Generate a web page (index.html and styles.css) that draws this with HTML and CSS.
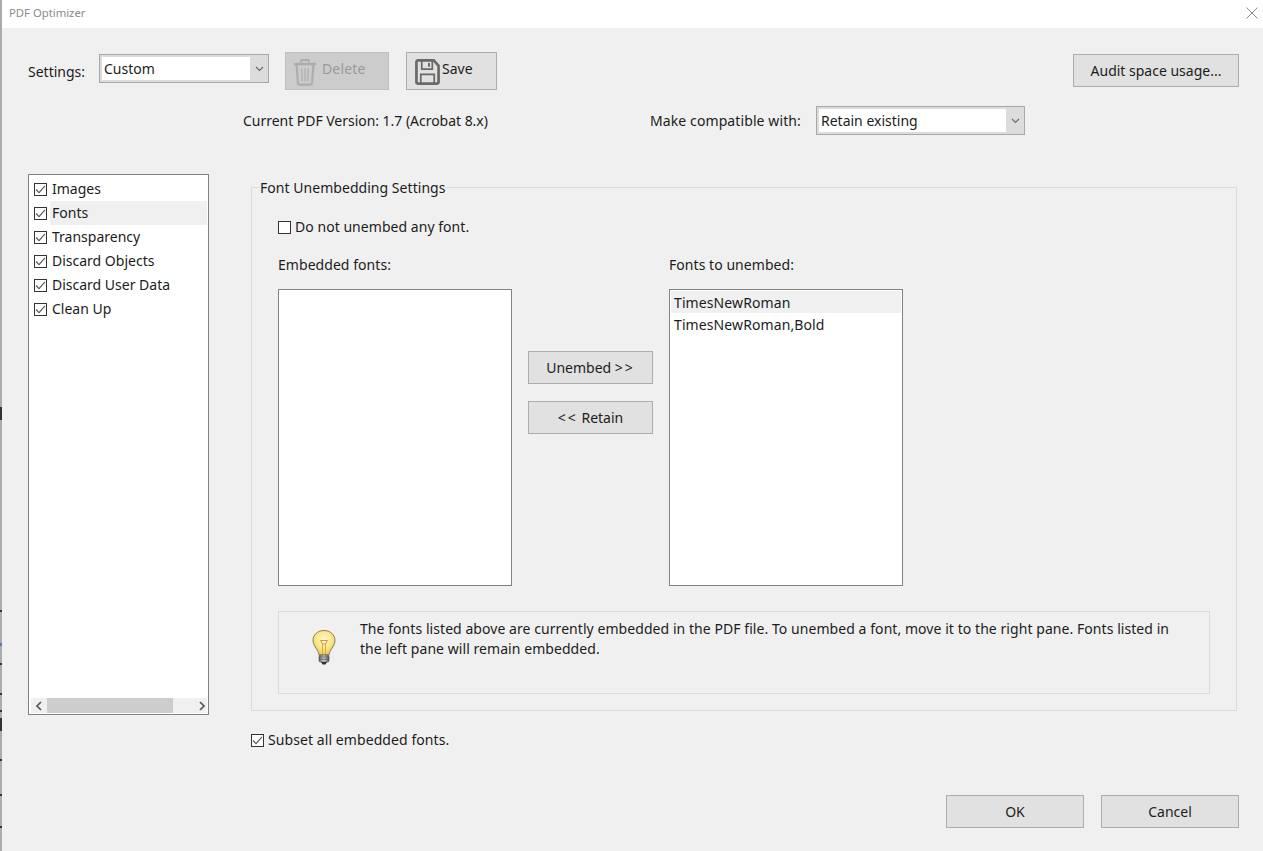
FILE: index.html
```html
<!DOCTYPE html>
<html lang="en">
<head>
<meta charset="utf-8">
<title>PDF Optimizer</title>
<link rel="stylesheet" href="styles.css">
</head>
<body>
<svg class="defs" width="0" height="0" aria-hidden="true">
  <symbol id="tick" viewBox="0 0 11 11"><path d="M1 5.500 4 8.600 10 1.800" fill="none" stroke="#555" stroke-width="1.100"/></symbol>
  <symbol id="chev" viewBox="0 0 9 6"><path d="M1 1 4.500 4.500 8 1" fill="none" stroke="#666" stroke-width="1.100"/></symbol>
</svg>
<div class="window">
  <header class="titlebar">
    <span class="title">PDF Optimizer</span>
    <svg class="close" width="12" height="12" viewBox="0 0 12 12"><path d="M.5 .5 11.500 11.500M11.500 .5 .5 11.500" stroke="#8a8a8a" stroke-width="1" fill="none"/></svg>
  </header>

  <section class="toolbar">
    <span class="settings-label">Settings:</span>
    <div class="combo combo-settings">
      <span class="combo-value">Custom</span>
      <svg class="chev" width="9" height="6"><use href="#chev"/></svg>
    </div>
    <div class="btn btn-delete">
      <svg width="26" height="28" viewBox="0 0 26 30" fill="none" stroke="#adadad">
        <path d="M1 6.500H25" stroke-width="2.600"/>
        <path d="M9 5V2.200H17V5" stroke-width="2"/>
        <path d="M4 7.500 5.500 27a1.500 1.500 0 0 0 1.500 1.400H19a1.500 1.500 0 0 0 1.500-1.400L22 7.500" stroke-width="2.400"/>
        <path d="M9.500 11 10 25M13 11V25M16.500 11 16 25" stroke-width="1.300"/>
      </svg>
      <span>Delete</span>
    </div>
    <div class="btn btn-save">
      <svg width="25" height="26" viewBox="0 0 26 27" fill="none" stroke="#696969">
        <path d="M3 1.500H19.500L24.500 7V24a1.500 1.500 0 0 1-1.500 1.500H3A1.500 1.500 0 0 1 1.500 24V3A1.500 1.500 0 0 1 3 1.500Z" stroke-width="2.800"/>
        <path d="M7 2V10.500H18V2" stroke-width="1.800"/>
        <path d="M14.500 4V8" stroke-width="2"/>
        <path d="M6 25V16H20V25" stroke-width="1.800"/>
      </svg>
      <span>Save</span>
    </div>
    <div class="btn btn-audit">Audit space usage...</div>
  </section>

  <section class="version-row">
    <span class="version">Current PDF Version: 1.7 (Acrobat 8.x)</span>
    <span class="compat-label">Make compatible with:</span>
    <div class="combo combo-compat">
      <span class="combo-value">Retain existing</span>
      <svg class="chev" width="9" height="6"><use href="#chev"/></svg>
    </div>
  </section>

  <main class="main">
    <aside class="panel-list">
      <ul class="panels">
        <li class="panel-item"><span class="check"><svg width="11" height="11"><use href="#tick"/></svg></span><span class="panel-name">Images</span></li>
        <li class="panel-item"><span class="check"><svg width="11" height="11"><use href="#tick"/></svg></span><span class="panel-name is-active">Fonts</span></li>
        <li class="panel-item"><span class="check"><svg width="11" height="11"><use href="#tick"/></svg></span><span class="panel-name">Transparency</span></li>
        <li class="panel-item"><span class="check"><svg width="11" height="11"><use href="#tick"/></svg></span><span class="panel-name">Discard Objects</span></li>
        <li class="panel-item"><span class="check"><svg width="11" height="11"><use href="#tick"/></svg></span><span class="panel-name">Discard User Data</span></li>
        <li class="panel-item"><span class="check"><svg width="11" height="11"><use href="#tick"/></svg></span><span class="panel-name">Clean Up</span></li>
      </ul>
      <div class="hscroll">
        <svg width="8" height="10" viewBox="0 0 8 10"><path d="M6 1 2 5 6 9" fill="none" stroke="#555" stroke-width="1.700"/></svg>
        <div class="hscroll-thumb"></div>
        <svg width="8" height="10" viewBox="0 0 8 10"><path d="M2 1 6 5 2 9" fill="none" stroke="#555" stroke-width="1.700"/></svg>
      </div>
    </aside>

    <div class="content">
      <section class="group">
        <span class="legend">Font Unembedding Settings</span>
        <label class="do-not">
          <span class="check"></span>
          <span>Do not unembed any font.</span>
        </label>
        <div class="columns">
          <div class="col">
            <div class="col-label">Embedded fonts:</div>
            <div class="listbox"></div>
          </div>
          <div class="move-buttons">
            <div class="btn btn-move">Unembed&nbsp;<span class="arrows">&gt;&gt;</span></div>
            <div class="btn btn-move"><span class="arrows">&lt;&lt;</span>&nbsp;Retain</div>
          </div>
          <div class="col">
            <div class="col-label">Fonts to unembed:</div>
            <div class="listbox">
              <div class="font-row is-selected">TimesNewRoman</div>
              <div class="font-row">TimesNewRoman,Bold</div>
            </div>
          </div>
        </div>
        <div class="tip">
          <svg class="bulb" width="28" height="38" viewBox="0 0 28 38">
            <defs>
              <radialGradient id="glass" cx="50%" cy="38%" r="62%">
                <stop offset="0" stop-color="#fff8d0"/>
                <stop offset=".55" stop-color="#fbe78e"/>
                <stop offset="1" stop-color="#ecc75a"/>
              </radialGradient>
              <linearGradient id="base" x1="0" x2="1" y1="0" y2="0">
                <stop offset="0" stop-color="#666"/>
                <stop offset=".5" stop-color="#d8d8d8"/>
                <stop offset="1" stop-color="#555"/>
              </linearGradient>
            </defs>
            <path d="M14 1.500C7.500 1.500 3 6 3 11.500c0 4.500 3.500 7.500 5 11 .6 1.400.9 2.500 1 3.500h10c.1-1 .4-2.100 1-3.500 1.500-3.500 5-6.500 5-11C25 6 20.500 1.500 14 1.500Z" fill="url(#glass)" stroke="#8b7d4e" stroke-width="1"/>
            <path d="M10.500 11.500h7l-2 3.500h-3Z" fill="#fff7cc" stroke="#c99f32" stroke-width="1"/>
            <path d="M12.500 15v10M15.500 15v10" stroke="#d9ad3c" stroke-width="1"/>
            <rect x="9" y="26" width="10" height="7" rx="1.500" fill="url(#base)" stroke="#444" stroke-width=".6"/>
            <path d="M9.500 28H18.500M9.500 30.300H18.500" stroke="#555" stroke-width=".8"/>
            <path d="M11 33h6l-1.500 2.500h-3Z" fill="#333"/>
          </svg>
          <p class="tip-text">The fonts listed above are currently embedded in the PDF file. To unembed a font, move it to the right pane. Fonts listed in the left pane will remain embedded.</p>
        </div>
      </section>
      <label class="subset">
        <span class="check"><svg width="11" height="11"><use href="#tick"/></svg></span>
        <span class="subset-text">Subset all embedded fonts.</span>
      </label>
    </div>
  </main>

  <footer class="footer">
    <div class="btn btn-footer">OK</div>
    <div class="btn btn-footer">Cancel</div>
  </footer>
</div>
</body>
</html>
```

FILE: styles.css
```css
* { box-sizing: border-box; }
html, body { margin: 0; padding: 0; }
body {
  width: 1263px;
  height: 851px;
  overflow: hidden;
  background: #f0f0f0;
  color: #1c1c1c;
  font-family: "Noto Sans", "Open Sans", sans-serif;
  font-size: 14px;
  line-height: 20px;
}
.defs { position: absolute; }
.window {
  height: 851px;
  border-left: 2px solid #ababab;
  border-image: linear-gradient(to bottom,
    #ababab 407px, #333 407px, #333 420px, #ababab 420px,
    #ababab 609px, #333 609px, #333 611px, #ababab 611px,
    #ababab 642px, #5a78b0 642px, #5a78b0 645px, #ababab 645px,
    #ababab 662px, #333 662px, #333 664px, #ababab 664px,
    #ababab 692px, #333 692px, #333 694px, #ababab 694px,
    #ababab 709px, #333 709px, #333 711px, #ababab 711px,
    #ababab 717px, #333 717px, #333 730px, #ababab 730px,
    #ababab 757px, #333 757px, #333 759px, #ababab 759px,
    #ababab 792px, #333 792px, #333 794px, #ababab 794px,
    #ababab 824px, #333 824px, #333 826px, #ababab 826px) 2;
  display: flex;
  flex-direction: column;
}

.titlebar {
  height: 28px;
  flex: none;
  background: #fff;
  display: flex;
  align-items: center;
  justify-content: space-between;
  padding: 0 5px 3px 7px;
}
.title { font-size: 11.300px; color: #8c8c8c; }
.close { display: block; margin-top: 0; }

.toolbar {
  height: 38px;
  margin-top: 24px;
  padding: 0 24px 0 26px;
  display: flex;
  align-items: flex-start;
}
.settings-label { margin-top: 10px; width: 71px; flex: none; }
.combo {
  display: flex;
  align-items: stretch;
  background: #dcdcdc;
  border: 1px solid #a8a8a8;
  position: relative;
}
.combo-value {
  flex: 1;
  background: #fff;
  margin: 2px 0 2px 2px;
  padding: 1px 0 0 2px;
  line-height: 22px;
}
.chev { align-self: center; margin: 0 4px 0 5px; }
.combo-settings { width: 170px; height: 29px; margin-top: 2px; margin-right: 16px; }
.combo-compat { width: 209px; height: 29px; }

.btn {
  display: flex;
  align-items: center;
  justify-content: center;
  background: #e1e1e1;
  border: 1px solid #adadad;
  flex: none;
}
.btn-delete {
  width: 104px;
  height: 38px;
  margin-right: 17px;
  background: #cccccc;
  border-color: #bfbfbf;
  color: #9a9a9a;
  justify-content: flex-start;
  gap: 4px;
  padding-left: 6px;
  padding-bottom: 4px;
}
.btn-delete svg { margin-top: 6px; }
.btn-delete span { margin-top: -1px; letter-spacing: .15px; }
.btn-save {
  width: 91px;
  height: 38px;
  justify-content: flex-start;
  gap: 2px;
  padding-left: 8px;
  padding-bottom: 4px;
}
.btn-save svg { margin-top: 5px; }
.btn-save span { margin-top: -1px; }
.btn-audit {
  width: 166px;
  height: 33px;
  margin-top: 2px;
  margin-left: auto;
}

.version-row {
  height: 29px;
  margin-top: 16px;
  display: flex;
  align-items: center;
  padding-left: 241px;
}
.version { width: 407px; flex: none; letter-spacing: -.03px; }
.compat-label { width: 166px; flex: none; letter-spacing: .1px; }

.main {
  margin-top: 39px;
  padding-left: 26px;
  display: flex;
  align-items: flex-start;
}
.panel-list {
  width: 181px;
  height: 541px;
  flex: none;
  background: #fff;
  border: 1px solid #828282;
  display: flex;
  flex-direction: column;
  padding: 2px 1px 1px 2px;
}
.panels {
  list-style: none;
  margin: 0;
  padding: 0;
  flex: 1;
}
.panel-item {
  height: 24px;
  display: flex;
  align-items: center;
}
.panel-item .check { margin: 0 5px 0 3px; }
.panel-name {
  flex: 1;
  height: 24px;
  line-height: 24px;
  padding-left: 2px;
  margin-left: -2px;
}
.panel-name.is-active { background: #f0f0f0; }
.check {
  width: 13px;
  height: 13px;
  flex: none;
  border: 1px solid #333;
  background: #fff;
  display: inline-flex;
  align-items: center;
  justify-content: center;
}
.check svg { display: block; }
.hscroll {
  height: 15px;
  flex: none;
  background: #f0f0f0;
  display: flex;
  align-items: center;
  justify-content: space-between;
  padding: 0 1px 0 4px;
}
.hscroll-thumb {
  width: 126px;
  height: 15px;
  background: #cdcdcd;
  margin-left: 4px;
  margin-right: auto;
}

.content {
  margin-left: 42px;
  width: 986px;
}
.group {
  height: 524px;
  margin-top: 13px;
  border: 1px solid #dcdcdc;
  padding: 0 26px;
}
.legend {
  display: block;
  width: max-content;
  margin: -10px 0 0 -18px;
  background: #f0f0f0;
  height: 20px;
  letter-spacing: .04px;
}
.do-not {
  display: flex;
  align-items: center;
  gap: 4px;
  margin-top: 19px;
  height: 20px;
  letter-spacing: .04px;
}
.columns {
  display: flex;
  margin-top: 18px;
}
.col { width: 234px; flex: none; }
.col-label { height: 20px; letter-spacing: .05px; }
.listbox {
  height: 297px;
  margin-top: 14px;
  background: #fff;
  border: 1px solid #828282;
  padding: 1px;
}
.font-row {
  height: 22px;
  line-height: 24px;
  padding-left: 3px;
  letter-spacing: .1px;
}
.font-row.is-selected { background: #f0f0f0; }
.move-buttons {
  width: 157px;
  flex: none;
  padding: 96px 16px 0;
  display: flex;
  flex-direction: column;
  gap: 17px;
}
.btn-move { height: 33px; width: 125px; }
.arrows { letter-spacing: 2px; }
.tip {
  width: 932px;
  height: 83px;
  margin-top: 25px;
  border: 1px solid #dcdcdc;
  display: flex;
  align-items: flex-start;
  padding: 7px 30px 0 31px;
}
.bulb { flex: none; margin-right: 22px; margin-top: 10px; }
.tip-text { margin: 0; letter-spacing: .06px; }

.subset {
  display: flex;
  align-items: center;
  gap: 4px;
  margin-top: 19px;
  height: 20px;
}
.subset-text { letter-spacing: .08px; }

.footer {
  margin-top: auto;
  margin-bottom: 23px;
  padding-right: 24px;
  display: flex;
  justify-content: flex-end;
  gap: 17px;
}
.btn-footer { width: 138px; height: 33px; }
```
